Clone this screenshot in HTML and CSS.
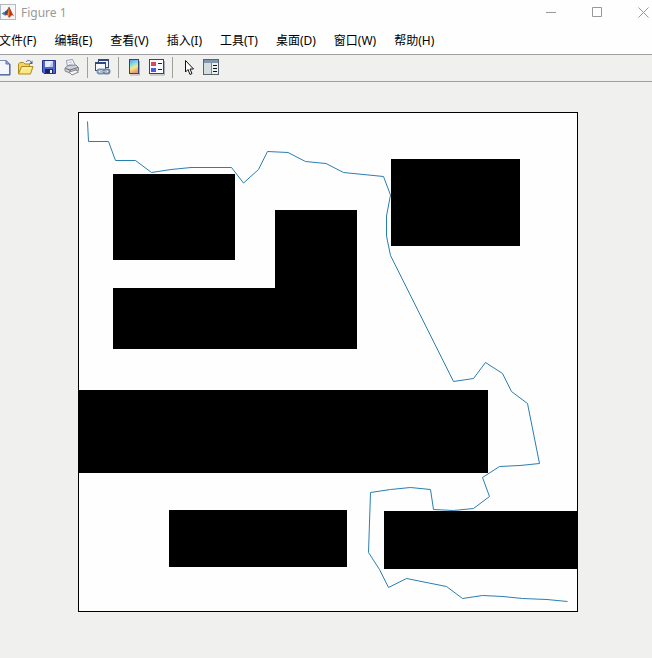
FILE: index.html
```html
<!DOCTYPE html>
<html lang="zh-CN">
<head>
<meta charset="utf-8">
<title>Figure 1</title>
<link rel="stylesheet" href="styles.css">
</head>
<body>
<div class="window">
  <header class="titlebar">
    <svg class="logo" viewBox="0 0 16 16" aria-hidden="true">
      <rect x="0.5" y="0.5" width="15" height="15" fill="#f4f6f8" stroke="#b4bac2"/>
      <path d="M1.500 9.500L5 7.500L7 9.500L5 11.500Z" fill="#3c7fb4"/>
      <path d="M5 7.500L7 6L9 3L7.500 10L5.500 11.500Z" fill="#285079"/>
      <path d="M9 2.500C10.500 4 11.500 9 14.500 12.500L12 11L9 14L7.500 11L5 11.500C7.500 9 8 4.500 9 2.500Z" fill="#b8391c"/>
      <path d="M9 3C9.500 6 9.500 10 9 13L7.500 10.500C8.500 8 8.500 5 9 3Z" fill="#ee8b35"/>
    </svg>
    <h1 class="title">Figure 1</h1>
    <div class="controls">
      <button class="control" aria-label="最小化"><svg viewBox="0 0 11 11"><path d="M0 5.500H10"/></svg></button>
      <button class="control" aria-label="最大化"><svg viewBox="0 0 11 11"><path d="M0.500 0.500H9.500V9.500H0.500Z"/></svg></button>
      <button class="control" aria-label="关闭"><svg viewBox="0 0 11 11"><path d="M0.500 0.500L10.500 10.500M10.500 0.500L0.500 10.500"/></svg></button>
    </div>
  </header>
  <nav class="menu">
    <button class="menu-item">文件(F)</button>
    <button class="menu-item">编辑(E)</button>
    <button class="menu-item">查看(V)</button>
    <button class="menu-item">插入(I)</button>
    <button class="menu-item">工具(T)</button>
    <button class="menu-item">桌面(D)</button>
    <button class="menu-item">窗口(W)</button>
    <button class="menu-item">帮助(H)</button>
  </nav>
  <div class="toolbar" role="toolbar">
    <button class="tool" aria-label="新建">
      <svg viewBox="0 0 17 17">
        <path d="M3.500 1.500H12L15.500 5V15.500H3.500Z" fill="#f4f7ff" stroke="#7d8fc0"/>
        <path d="M16 5V16H4" fill="none" stroke="#40558c"/>
        <path d="M12 1.500V5H15.500Z" fill="#a9b9e2" stroke="#5a6ea8"/>
      </svg>
    </button>
    <button class="tool" aria-label="打开">
      <svg viewBox="0 0 17 17">
        <path d="M1.500 14.500V5L3 3.500H6.500L8 5H12.500V8" fill="#f3d661" stroke="#b08a1c"/>
        <path d="M1.500 15L4.500 7.500H16L13.500 15Z" fill="#fbe680" stroke="#b08a1c"/>
        <path d="M4 13.500L6 9H14" fill="none" stroke="#fff7b8"/>
        <path d="M9 3C10.500 0.800 13 1 14.500 3.500" fill="none" stroke="#4c658a"/>
        <path d="M15.500 1.500V5H12Z" fill="#4c658a"/>
      </svg>
    </button>
    <button class="tool" aria-label="保存">
      <svg viewBox="0 0 17 17">
        <path d="M2.500 1.500H15.500V14.500H4L2.500 13Z" fill="#5265d2" stroke="#24308a"/>
        <rect x="5" y="2" width="8" height="6" fill="#e6ecf8"/>
        <path d="M9 8L13 2V8Z" fill="#b9c6e8"/>
        <rect x="5" y="10" width="8" height="4" fill="#1b225e"/>
        <rect x="10" y="11" width="2" height="3" fill="#f4f6ff"/>
      </svg>
    </button>
    <button class="tool" aria-label="打印">
      <svg viewBox="0 0 17 17">
        <path d="M4.500 7.500L3.500 1.500L9.500 0.500L12.500 7Z" fill="#fafbff" stroke="#9299a6"/>
        <path d="M5.500 3.500L9 3M6 5.500L10 5" stroke="#b9c1d2"/>
        <path d="M2 9L5 6.500L13 6L15.500 8.500V11.500L7 14L2 12Z" fill="#cccfd3" stroke="#84888f"/>
        <path d="M2.500 9.500L7 11L15 8.500M7 11V14" fill="none" stroke="#6a6e75"/>
        <path d="M6 13L13 11L15.500 13L9 16Z" fill="#f5f5f2" stroke="#84888f"/>
        <rect x="12" y="10" width="2" height="1" fill="#c99a35"/>
      </svg>
    </button>
    <span class="separator"></span>
    <button class="tool" aria-label="链接绘图">
      <svg viewBox="0 0 17 17">
        <rect x="4.500" y="0.500" width="10" height="8" fill="#eef3fc" stroke="#34487e"/>
        <path d="M4 1H15" stroke="#34487e" stroke-width="2"/>
        <rect x="1.500" y="3.500" width="10" height="8" fill="#f7f9ff" stroke="#34487e"/>
        <path d="M1 4H12" stroke="#34487e" stroke-width="2"/>
        <rect x="3.500" y="10.500" width="7" height="4" rx="2" fill="#f2f5f9" stroke="#7c92aa" stroke-width="2"/>
        <rect x="9.500" y="10.500" width="6" height="4" rx="2" fill="#f2f5f9" stroke="#6c839d" stroke-width="2"/>
        <path d="M6 12.500H13" stroke="#a6b9ca"/>
      </svg>
    </button>
    <span class="separator"></span>
    <button class="tool" aria-label="插入颜色栏">
      <svg viewBox="0 0 17 17">
        <defs><linearGradient id="spectrum" x1="0" y1="0" x2="0.300" y2="1"><stop offset="0" stop-color="#7a83e0"/><stop offset="0.350" stop-color="#73d7ed"/><stop offset="0.650" stop-color="#f0ed8a"/><stop offset="1" stop-color="#f09a70"/></linearGradient></defs>
        <path d="M5 16H14.500V2" fill="none" stroke="#a9abb2"/>
        <rect x="4.500" y="0.500" width="9" height="14" fill="url(#spectrum)" stroke="#35446f"/>
      </svg>
    </button>
    <button class="tool" aria-label="插入图例">
      <svg viewBox="0 0 17 17">
        <path d="M2 16H16.500V2" fill="none" stroke="#a9abb2"/>
        <rect x="1.500" y="0.500" width="14" height="14" fill="#f8faff" stroke="#35446f"/>
        <rect x="3" y="3" width="5" height="4" fill="#d94b4b"/>
        <rect x="3" y="9" width="5" height="4" fill="#5555df"/>
        <path d="M10 4.500H14M10 10.500H14" stroke="#222"/>
      </svg>
    </button>
    <span class="separator"></span>
    <button class="tool" aria-label="编辑绘图">
      <svg viewBox="0 0 17 17">
        <path d="M6.500 1.500V13L9 10.500L11 15.500L13 14.500L11 10H14.500Z" fill="#fff" stroke="#111"/>
      </svg>
    </button>
    <button class="tool" aria-label="打开属性检查器">
      <svg viewBox="0 0 17 17">
        <rect x="1.500" y="0.500" width="15" height="15" fill="#eef1f2" stroke="#59646f"/>
        <rect x="2" y="1" width="14" height="3" fill="#8197a9"/>
        <rect x="2" y="4" width="7" height="11" fill="#d3dcde"/>
        <path d="M9.500 4V15" stroke="#7e8990"/>
        <path d="M11 6.500H15M11 9.500H15M11 12.500H15" stroke="#111"/>
      </svg>
    </button>
  </div>
  <main class="figure">
    <svg class="plot" viewBox="78 112 500 500" role="img" aria-label="路径规划图">
      <rect x="78.500" y="112.500" width="499" height="499" fill="#fefefe"/>
      <g fill="#000">
        <rect x="113" y="174" width="122" height="86"/>
        <path d="M275 210H357V349H113V288H275Z"/>
        <rect x="391" y="159" width="129" height="87"/>
        <rect x="78" y="390" width="410" height="83"/>
        <rect x="169" y="510" width="178" height="57"/>
        <rect x="384" y="511" width="194" height="58"/>
      </g>
      <polyline class="path" points="87.500,121.500 88.500,141.500 108.500,141.500 115.500,160.500 135.500,160.500 151.500,172.500 171,169.500 191,167.500 231.500,167.500 243.500,183 258.500,169.500 267.500,151.500 288,152.500 305.500,161.500 326,163.500 343.500,172.500 383.500,176.500 390.500,195 386.500,216 386.500,236 390.500,255.500 453.500,381.500 473.500,378.500 485.500,362.500 502.500,373.500 511.500,391.500 527.500,403.500 539.500,463.500 520,465.500 499.500,466.500 482.500,477.500 489.500,496.500 473.500,508.500 453.500,510.500 433.500,509.500 430.500,489.500 410.500,487.500 390.500,489.500 370.500,492.500 368.500,552.500 379.500,569.500 388.500,587.500 406.500,578.500 446.500,586.500 462.500,598.500 482.500,595.500 503,596.500 522.500,598.500 547,599.500 567.500,601.500"/>
      <rect x="78.500" y="112.500" width="499" height="499" fill="none" stroke="#000"/>
    </svg>
  </main>
</div>
</body>
</html>
```
FILE: styles.css
```css
* {
  box-sizing: border-box;
}

body {
  margin: 0;
  background: #f0f0ef;
  color: #000;
  font-family: "Noto Sans", "Noto Sans CJK SC", sans-serif;
  font-size: 12px;
}

button {
  margin: 0;
  padding: 0;
  border: 0;
  background: transparent;
  color: inherit;
  font: inherit;
}

svg {
  display: block;
}

.window {
  display: flex;
  flex-direction: column;
  min-height: 100vh;
  overflow: hidden;
}

.titlebar {
  display: flex;
  align-items: center;
  gap: 5px;
  height: 26px;
  padding-bottom: 2px;
  background: #fefefe;
}

.logo {
  width: 16px;
  height: 16px;
}

.title {
  margin: 0;
  color: #999;
  font-size: 12px;
  font-weight: 400;
}

.controls {
  display: flex;
  margin-left: auto;
  margin-right: -14px;
}

.control {
  display: flex;
  align-items: center;
  justify-content: center;
  width: 46px;
  height: 24px;
}

.control svg {
  width: 11px;
  height: 11px;
  fill: none;
  stroke: #999;
}

.menu {
  display: flex;
  gap: 18px;
  height: 29px;
  border-bottom: 1px solid #a0a0a0;
  background: #fefefe;
}

.menu-item {
  white-space: nowrap;
}

.menu-item:first-child {
  margin-left: -1px;
}

.toolbar {
  display: flex;
  align-items: center;
  height: 27px;
  margin-left: -9px;
  padding-bottom: 2px;
  border-bottom: 1px solid #a0a0a0;
  background: #f0f0ef;
}

.tool {
  padding: 3px;
}

.tool svg {
  width: 17px;
  height: 17px;
}

.separator {
  width: 1px;
  height: 21px;
  margin: 0 3px 0 4px;
  background: #a0a0a0;
}

.figure {
  padding: 30px 74px 46px 78px;
}

.plot {
  width: 100%;
  height: auto;
}

.path {
  fill: none;
  stroke: #2a7fb2;
  stroke-width: 1;
}
```
